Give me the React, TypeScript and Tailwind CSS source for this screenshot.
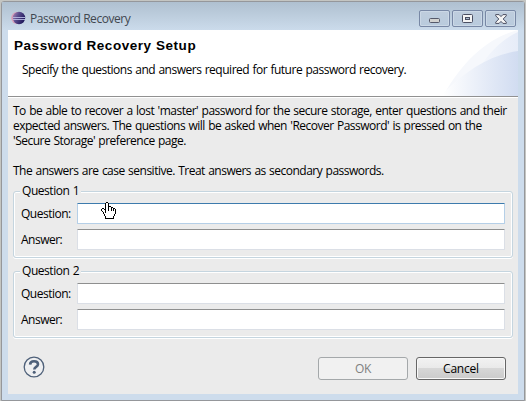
import React from "react";

const HAND = [
  ".....XX........",
  "....X..X.......",
  "....X..X.......",
  "....X..X.......",
  "....X..XXX.....",
  "....X..X..XX...",
  ".XX.X..X..X.XX.",
  "X..XX..X..X.X.X",
  "X...X..X..X.X.X",
  ".X..X.........X",
  "..X.X.........X",
  "..X...........X",
  "...X.........X.",
  "...X.........X.",
  "....X.......X..",
  "....X.......X..",
  "....XXXXXXXXX..",
];

function HandCursor() {
  return (
    <svg className="absolute left-[101px] top-[202px] h-[17px] w-[15px]" viewBox="0 0 15 17" shapeRendering="crispEdges">
      <path d="M5 1h2v4h3v1h2v1h2v5h-1v2h-1v2H5v-2H4v-2H3v-2H2V9H1V7h2v1h2z" fill="#fff" />
      {HAND.map((row, y) =>
        row.split("").map((c, x) => (c === "X" ? <rect key={`${x}-${y}`} x={x} y={y} width="1" height="1" fill="#000" /> : null)),
      )}
    </svg>
  );
}

function EclipseIcon() {
  return (
    <svg className="h-[14px] w-[15px]" viewBox="0 0 15 14">
      <defs>
        <linearGradient id="ball" x1="0" y1="0" x2="1" y2="0.5">
          <stop offset="0" stopColor="#b58bb5" />
          <stop offset="0.45" stopColor="#5a4c8e" />
          <stop offset="1" stopColor="#211a5c" />
        </linearGradient>
      </defs>
      <ellipse cx="6" cy="7" rx="5.8" ry="6" fill="#d9a0ba" />
      <circle cx="8" cy="7" r="6.2" fill="url(#ball)" />
      <path d="M2 6.5h12M2 8.5h12" stroke="#b9bce4" strokeWidth="0.9" />
    </svg>
  );
}

function CaptionButton({ children }: { children: React.ReactNode }) {
  return (
    <div className="flex h-[17px] w-[31px] items-center justify-center rounded-[2px] border border-[#7888a5] bg-gradient-to-b from-[#bfcddd] to-[#b9cbdd] shadow-[inset_0_0_0_1px_#cbd8e6]">
      {children}
    </div>
  );
}

function Field({ label, active }: { label: string; active?: boolean }) {
  return (
    <div className="flex h-[21px] items-center">
      <span className="w-[56px] pt-px tracking-[-0.5px]">{label}</span>
      <div
        className={
          active
            ? "h-[21px] w-[428px] rounded-[1px] border border-[#b5cfe7] border-t-[#3d7bad] bg-white"
            : "h-[21px] w-[428px] rounded-[1px] border border-[#dbdfe6] border-t-[#8e8f8f] bg-white"
        }
      />
    </div>
  );
}

function Group({ title, active }: { title: string; active?: boolean }) {
  return (
    <div className="relative h-[67px] w-[500px] rounded-[3px] border border-[#c5d5df] pl-[7px] pt-[11px] shadow-[inset_0_0_0_1px_#fff,0_1px_0_#fff]">
      <span className="absolute left-[6px] top-[-9px] bg-[#ebebeb] px-[2px] leading-[16px] tracking-[-0.45px] [word-spacing:0.6px]">{title}</span>
      <div className="flex flex-col gap-[5px]">
        <Field label="Question:" active={active} />
        <Field label="Answer:" />
      </div>
    </div>
  );
}

export default function App() {
  return (
    <div className="relative h-[401px] w-[526px] overflow-hidden bg-[#c4c5c2] pl-px pt-px font-['Open_Sans','Noto_Sans',sans-serif] text-[12px] text-black">
      <div className="h-[400px] w-[524px] rounded-t-[3px] border border-[#95979b] bg-[#cddcec] px-[6px]">
        <div className="-mx-[6px] flex h-[28px] items-start bg-gradient-to-b from-[#afc0d0] to-[#cbdbeb] pl-[9px] pr-[8px]">
          <div className="mt-[9px]"><EclipseIcon /></div>
          <span className="ml-[4px] mt-[9px] whitespace-nowrap leading-[16px] tracking-[-0.45px] text-[#41474f]">Password Recovery</span>
          <div className="ml-auto mt-[8px] flex gap-[2px]">
            <CaptionButton>
              <svg className="mt-[4px] h-[5px] w-[11px]" viewBox="0 0 11 5"><rect x=".5" y=".5" width="10" height="4" rx="1" fill="#d2d2d0" stroke="#55596a" /></svg>
            </CaptionButton>
            <CaptionButton>
              <svg className="h-[9px] w-[11px]" viewBox="0 0 11 9"><rect x=".5" y=".5" width="10" height="8" rx="1" fill="#f4f4f4" stroke="#4b4f62" /><rect x="3.5" y="3.5" width="4" height="2" fill="#a9b9cc" stroke="#4b4f62" /></svg>
            </CaptionButton>
            <CaptionButton>
              <svg className="h-[10px] w-[12px]" viewBox="0 0 12 10"><path d="M.7.6h3.4L6 2.6 7.9.6h3.4v1.2L8.2 5l3.1 3.2v1.2H7.9L6 7.4l-1.9 2H.7V8.2L3.8 5 .7 1.8z" fill="#f4f4f4" stroke="#4b4f62" /></svg>
            </CaptionButton>
          </div>
        </div>

        <div className="h-[364px] w-[510px] bg-[#ebebeb]">
          <div className="relative h-[67px] border-b border-[#919191] bg-white">
            <svg className="absolute right-0 top-0 h-[66px] w-[90px]" viewBox="0 0 90 66">
              <defs>
                <linearGradient id="sweep" gradientUnits="userSpaceOnUse" x1="15" x2="90" y1="0" y2="0"><stop offset="0.1" stopColor="#fff" /><stop offset="1" stopColor="#e6ecf8" /></linearGradient>
                <linearGradient id="hill" gradientUnits="userSpaceOnUse" x1="15" x2="90" y1="0" y2="0"><stop offset="0" stopColor="#fff" /><stop offset="1" stopColor="#d1dcf1" /></linearGradient>
              </defs>
              <path d="M90 0C62 7 36 28 15 66H90z" fill="#f6f8fc" />
              <path d="M90 2C74 9 62 22 52 37L30 66H90z" fill="url(#sweep)" />
              <path d="M90 21C62 25 38 40 12 66H90z" fill="url(#hill)" />
            </svg>
            <div className="relative pl-[6px] pt-[8px]">
              <div className="whitespace-nowrap font-['Liberation_Sans'] text-[13.5px] font-bold leading-[16px] tracking-[0.55px]">Password Recovery Setup</div>
              <div className="ml-[8px] mt-[8px] whitespace-nowrap leading-[16px] tracking-[-0.48px] [word-spacing:0.6px]">Specify the questions and answers required for future password recovery.</div>
            </div>
          </div>
          <div className="h-px bg-white" />

          <p className="h-[93px] whitespace-nowrap pl-[5px] pt-[5px] leading-[15px] tracking-[-0.5px] [word-spacing:0.7px]">
            To be able to recover a lost 'master' password for the secure storage, enter questions and their
            <br />
            expected answers. The questions will be asked when 'Recover Password' is pressed on the
            <br />
            'Secure Storage' preference page.
            <br />
            <br />
            The answers are case sensitive. Treat answers as secondary passwords.
          </p>

          <div className="flex flex-col gap-[13px] pl-[5px]">
            <Group title="Question 1" active />
            <Group title="Question 2" />
          </div>

          <div className="flex pl-[15px] pt-[19px]">
            <svg className="-mt-px h-[22px] w-[22px]" viewBox="0 0 22 22">
              <circle cx="11" cy="11" r="9.8" fill="#eeeff1" stroke="#4e6079" strokeWidth="1.3" />
              <path d="M7.1 8.6C7.2 6 8.8 5.2 11 5.2s4 1 4 3.1c0 2.7-3.7 2.4-3.7 5.1" fill="none" stroke="#4e6079" strokeWidth="2.6" />
              <circle cx="11.2" cy="16.2" r="1.5" fill="#4e6079" />
            </svg>
            <div className="ml-auto mr-[12px] flex gap-[8px] text-center leading-[22px]">
              <div className="h-[23px] w-[90px] rounded-[3px] border border-[#a4a8aa] bg-[#f1f1f1] tracking-[-0.3px] text-[#808080]">OK</div>
              <div className="h-[23px] w-[90px] rounded-[3px] border border-[#666] bg-[linear-gradient(#f2f2f2_0%,#e9e9e9_49%,#d7d7d7_50%,#cbcbcb_100%)] tracking-[-0.2px] shadow-[inset_0_0_0_1px_#f8f8f8]">Cancel</div>
            </div>
          </div>
        </div>
      </div>
      <HandCursor />
    </div>
  );
}
